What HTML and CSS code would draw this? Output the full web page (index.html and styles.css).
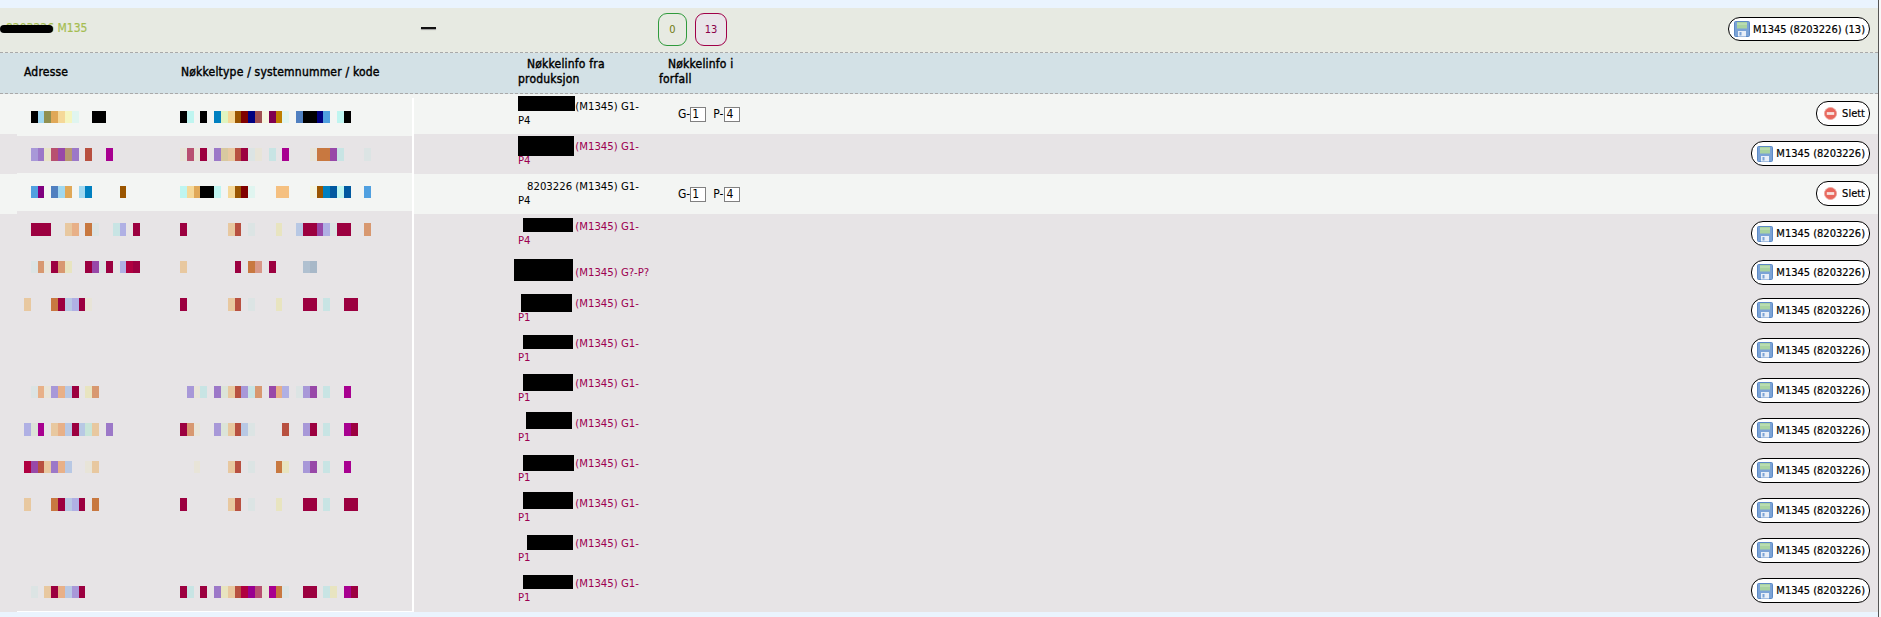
FILE: index.html
```html
<!DOCTYPE html>
<html lang="no">
<head>
<meta charset="utf-8">
<title>M1345</title>
<link rel="stylesheet" href="styles.css">
</head>
<body>
<svg class="defs" width="0" height="0" aria-hidden="true">
  <symbol id="save" viewBox="0 0 16 16">
    <rect x="0.5" y="0.5" width="15" height="15" rx="1" fill="#7ba3d6" stroke="#5d8ac6"/>
    <rect x="3" y="1" width="10" height="6.5" fill="#a9d3a0"/>
    <rect x="3" y="2.5" width="10" height="1" fill="#c9e6c2"/>
    <rect x="4" y="10" width="8" height="5.5" fill="#e9eff8"/>
    <rect x="5.5" y="11" width="2" height="3.5" fill="#7ba3d6"/>
  </symbol>
  <symbol id="del" viewBox="0 0 14 14">
    <circle cx="7" cy="7" r="6.5" fill="#e8675c" stroke="#eca8a0"/>
    <rect x="3" y="5.5" width="8" height="3" fill="#f8e4e0"/>
  </symbol>
</svg>
<main class="page">
  <section class="group">
    <div class="group-name">8203226 M135<span class="scribble"></span></div>
    <div class="group-dash"><span class="dash"></span></div>
    <div class="badges"><span class="badge badge-ok">0</span><span class="badge badge-due">13</span></div>
    <button class="btn btn-head" type="button"><svg class="ico"><use href="#save"/></svg>M1345 (8203226) (13)</button>
  </section>
  <header class="columns">
    <div>Adresse</div>
    <div>Nøkkeltype / systemnummer / kode</div>
    <div class="col-wrap">Nøkkelinfo fra produksjon</div>
    <div class="col-wrap col-due">Nøkkelinfo i forfall</div>
  </header>
  <div class="rows">
    <div class="row light">
      <div></div>
      <div class="info"><p>8203226 (M1345) G1-P4</p><span class="redact r1"></span></div>
      <div class="due">G-<input class="gp" value="1" readonly> <span class="p">P-</span><input class="gp" value="4" readonly></div>
      <button class="btn btn-del" type="button"><svg class="ico-del"><use href="#del"/></svg>Slett</button>
    </div>
    <div class="row dark">
      <div></div>
      <div class="info"><p>8203226 (M1345) G1-P4</p><span class="redact r2"></span></div>
      <div class="due"></div>
      <button class="btn" type="button"><svg class="ico"><use href="#save"/></svg>M1345 (8203226)</button>
    </div>
    <div class="row light">
      <div></div>
      <div class="info"><p>8203226 (M1345) G1-P4</p></div>
      <div class="due">G-<input class="gp" value="1" readonly> <span class="p">P-</span><input class="gp" value="4" readonly></div>
      <button class="btn btn-del" type="button"><svg class="ico-del"><use href="#del"/></svg>Slett</button>
    </div>
    <div class="row dark">
      <div></div>
      <div class="info"><p>8203226 (M1345) G1-P4</p><span class="redact r4"></span></div>
      <div class="due"></div>
      <button class="btn" type="button"><svg class="ico"><use href="#save"/></svg>M1345 (8203226)</button>
    </div>
    <div class="row dark short">
      <div></div>
      <div class="info"><p class="one">8203226 (M1345) G?-P?</p><span class="redact r5"></span></div>
      <div class="due"></div>
      <button class="btn" type="button"><svg class="ico"><use href="#save"/></svg>M1345 (8203226)</button>
    </div>
    <div class="row dark mid">
      <div></div>
      <div class="info"><p>8203226 (M1345) G1-P1</p><span class="redact r6"></span></div>
      <div class="due"></div>
      <button class="btn" type="button"><svg class="ico"><use href="#save"/></svg>M1345 (8203226)</button>
    </div>
    <div class="row dark">
      <div></div>
      <div class="info"><p>8203226 (M1345) G1-P1</p><span class="redact r7"></span></div>
      <div class="due"></div>
      <button class="btn" type="button"><svg class="ico"><use href="#save"/></svg>M1345 (8203226)</button>
    </div>
    <div class="row dark">
      <div></div>
      <div class="info"><p>8203226 (M1345) G1-P1</p><span class="redact r8"></span></div>
      <div class="due"></div>
      <button class="btn" type="button"><svg class="ico"><use href="#save"/></svg>M1345 (8203226)</button>
    </div>
    <div class="row dark">
      <div></div>
      <div class="info"><p>8203226 (M1345) G1-P1</p><span class="redact r9"></span></div>
      <div class="due"></div>
      <button class="btn" type="button"><svg class="ico"><use href="#save"/></svg>M1345 (8203226)</button>
    </div>
    <div class="row dark">
      <div></div>
      <div class="info"><p>8203226 (M1345) G1-P1</p><span class="redact r10"></span></div>
      <div class="due"></div>
      <button class="btn" type="button"><svg class="ico"><use href="#save"/></svg>M1345 (8203226)</button>
    </div>
    <div class="row dark">
      <div></div>
      <div class="info"><p>8203226 (M1345) G1-P1</p><span class="redact r11"></span></div>
      <div class="due"></div>
      <button class="btn" type="button"><svg class="ico"><use href="#save"/></svg>M1345 (8203226)</button>
    </div>
    <div class="row dark">
      <div></div>
      <div class="info"><p>8203226 (M1345) G1-P1</p><span class="redact r12"></span></div>
      <div class="due"></div>
      <button class="btn" type="button"><svg class="ico"><use href="#save"/></svg>M1345 (8203226)</button>
    </div>
    <div class="row dark tall">
      <div></div>
      <div class="info"><p>8203226 (M1345) G1-P1</p><span class="redact r13"></span></div>
      <div class="due"></div>
      <button class="btn" type="button"><svg class="ico"><use href="#save"/></svg>M1345 (8203226)</button>
    </div>

    <div class="mosaic">
      <div class="mrow lite">
        <div class="m"><i></i><i class="k"></i><i class="lb"></i><i class="ol"></i><i class="or"></i><i class="pe"></i><i class="ye"></i><i class="pc"></i><i></i><i></i><i class="k"></i><i class="k"></i></div>
        <div class="m"><i class="k"></i><i class="cy"></i><i></i><i class="k"></i><i></i><i class="bl"></i><i class="lg"></i><i class="pe"></i><i class="br"></i><i class="dr"></i><i class="nv"></i><i class="ro"></i><i class="cr"></i><i class="pl"></i><i class="go"></i><i class="pc"></i><i></i><i class="mb"></i><i class="k"></i><i class="k"></i><i class="nv"></i><i class="sb"></i><i></i><i class="cy"></i><i class="k"></i></div>
      </div>
      <div class="mrow">
        <div class="m"><i></i><i class="la"></i><i class="li"></i><i class="sa"></i><i class="rs"></i><i class="pu"></i><i class="ta"></i><i class="li"></i><i></i><i class="bk"></i><i></i><i></i><i class="mg"></i></div>
        <div class="m"><i class="sd"></i><i class="rs"></i><i class="sd"></i><i class="cm"></i><i></i><i class="li"></i><i class="ca"></i><i class="be"></i><i class="bk"></i><i class="cm"></i><i class="gc"></i><i class="sd"></i><i></i><i class="tc"></i><i></i><i class="mg"></i><i></i><i></i><i></i><i class="sd"></i><i class="oc"></i><i class="oc"></i><i class="pu"></i><i class="tc"></i><i></i><i></i><i></i><i class="gc"></i></div>
      </div>
      <div class="mrow lite">
        <div class="m"><i></i><i class="sb"></i><i class="vi"></i><i></i><i class="mb"></i><i class="lb"></i><i class="or"></i><i></i><i class="lb"></i><i class="bl"></i><i></i><i></i><i></i><i></i><i class="br"></i></div>
        <div class="m"><i class="cy"></i><i class="pe"></i><i class="or"></i><i class="k"></i><i class="k"></i><i class="cy"></i><i></i><i class="pe"></i><i class="br"></i><i class="dr"></i><i class="pc"></i><i></i><i></i><i></i><i class="ap"></i><i class="ap"></i><i></i><i></i><i></i><i class="cr"></i><i class="br"></i><i class="bl"></i><i class="db"></i><i class="cy"></i><i class="db"></i><i></i><i></i><i class="sb"></i></div>
      </div>
      <div class="mrow">
        <div class="m"><i></i><i class="cm"></i><i class="cm"></i><i class="cm"></i><i></i><i></i><i class="be"></i><i class="pp"></i><i></i><i class="oc"></i><i class="gc"></i><i></i><i></i><i class="tc"></i><i class="pb"></i><i></i><i class="cm"></i></div>
        <div class="m"><i class="cm"></i><i></i><i></i><i></i><i></i><i></i><i></i><i class="be"></i><i class="bk"></i><i></i><i class="gc"></i><i></i><i></i><i></i><i class="yl"></i><i></i><i></i><i class="sl"></i><i class="cm"></i><i class="cm"></i><i class="pu"></i><i class="pb"></i><i class="gc"></i><i class="cm"></i><i class="cm"></i><i></i><i></i><i class="sn"></i></div>
      </div>
      <div class="mrow">
        <div class="m"><i></i><i class="gc"></i><i class="sn"></i><i class="sd"></i><i class="cm"></i><i class="sn"></i><i class="yl"></i><i></i><i></i><i class="cm"></i><i class="pu"></i><i class="gc"></i><i class="cm"></i><i></i><i class="pb"></i><i class="ho"></i><i class="cm"></i></div>
        <div class="m"><i class="be"></i><i></i><i></i><i></i><i></i><i></i><i></i><i></i><i class="cm"></i><i></i><i class="oc"></i><i class="rb"></i><i></i><i class="cm"></i><i></i><i></i><i></i><i></i><i class="s1"></i><i class="s2"></i></div>
      </div>
      <div class="mrow">
        <div class="m"><i class="be"></i><i></i><i></i><i></i><i class="oc"></i><i class="cm"></i><i class="sl"></i><i class="pb"></i><i class="cm"></i><i class="sd"></i></div>
        <div class="m"><i class="cm"></i><i></i><i></i><i></i><i></i><i></i><i></i><i class="be"></i><i class="bk"></i><i></i><i class="gc"></i><i></i><i></i><i></i><i class="yl"></i><i></i><i></i><i></i><i class="cm"></i><i class="cm"></i><i></i><i class="tc"></i><i></i><i></i><i class="cm"></i><i class="cm"></i></div>
      </div>
      <div class="mrow gap"></div>
      <div class="mrow">
        <div class="m"><i></i><i class="gc"></i><i class="pp"></i><i class="sd"></i><i class="la"></i><i class="pp"></i><i class="sl"></i><i class="cm"></i><i></i><i class="yl"></i><i class="sn"></i></div>
        <div class="m"><i></i><i class="la"></i><i class="sd"></i><i class="tc"></i><i></i><i class="li"></i><i class="gy"></i><i class="be"></i><i class="bk"></i><i class="la"></i><i class="tc"></i><i class="sn"></i><i></i><i class="pu"></i><i class="pp"></i><i class="pb"></i><i></i><i class="gc"></i><i class="la"></i><i class="pu"></i><i></i><i class="tc"></i><i></i><i></i><i class="mg"></i></div>
      </div>
      <div class="mrow">
        <div class="m"><i class="pb"></i><i class="gy"></i><i class="mg"></i><i></i><i class="be"></i><i class="pp"></i><i class="sl"></i><i class="cm"></i><i class="sl"></i><i class="mt"></i><i class="be"></i><i></i><i class="li"></i></div>
        <div class="m"><i class="cm"></i><i class="sn"></i><i class="sd"></i><i></i><i></i><i class="la"></i><i class="gy"></i><i class="be"></i><i class="bk"></i><i class="sl"></i><i class="gc"></i><i></i><i></i><i></i><i></i><i class="bk"></i><i></i><i></i><i class="la"></i><i class="cm"></i><i></i><i class="tc"></i><i></i><i></i><i class="mg"></i><i class="cm"></i></div>
      </div>
      <div class="mrow">
        <div class="m"><i class="ho"></i><i class="pu"></i><i class="bk"></i><i class="be"></i><i class="li"></i><i class="pp"></i><i class="sl"></i><i></i><i></i><i class="sd"></i><i class="be"></i></div>
        <div class="m"><i></i><i></i><i class="sd"></i><i></i><i></i><i></i><i></i><i class="be"></i><i class="bk"></i><i></i><i class="gc"></i><i></i><i></i><i></i><i class="oc"></i><i class="yl"></i><i></i><i></i><i class="la"></i><i class="pu"></i><i></i><i class="tc"></i><i></i><i></i><i class="mg"></i></div>
      </div>
      <div class="mrow">
        <div class="m"><i class="be"></i><i></i><i></i><i></i><i class="oc"></i><i class="cm"></i><i class="sl"></i><i class="pb"></i><i class="cm"></i><i></i><i class="oc"></i></div>
        <div class="m"><i class="cm"></i><i></i><i></i><i></i><i></i><i></i><i></i><i class="be"></i><i class="bk"></i><i></i><i class="gc"></i><i></i><i></i><i></i><i class="yl"></i><i></i><i></i><i></i><i class="cm"></i><i class="cm"></i><i></i><i class="tc"></i><i></i><i></i><i class="cm"></i><i class="cm"></i></div>
      </div>
      <div class="mrow gap"></div>
      <div class="mrow">
        <div class="m"><i></i><i class="gc"></i><i></i><i class="be"></i><i class="cm"></i><i class="pp"></i><i class="sl"></i><i class="la"></i><i class="cm"></i></div>
        <div class="m"><i class="cm"></i><i class="tc"></i><i></i><i class="cm"></i><i></i><i class="li"></i><i class="yl"></i><i class="be"></i><i class="bk"></i><i class="ho"></i><i class="vm"></i><i class="rs"></i><i class="sd"></i><i class="mg"></i><i class="oc"></i><i class="gc"></i><i></i><i></i><i class="cm"></i><i class="cm"></i><i></i><i class="tc"></i><i class="yl"></i><i></i><i class="mg"></i><i class="cm"></i></div>
      </div>
    </div>
  </div>
</main>
</body>
</html>
```
FILE: styles.css
```css
html, body {
  margin: 0;
  padding: 0;
  background: #f8f8f8;
}
body {
  font-family: "DejaVu Sans Condensed", "DejaVu Sans", sans-serif;
  font-stretch: condensed;
  font-size: 11px;
  color: #000;
  overflow: hidden;
}
.defs { position: absolute; }
.page {
  width: 1879px;
  height: 617px;
  padding-top: 8px;
  box-sizing: border-box;
  background: #eaf4fe;
  border-right: 1px solid #555;
}

/* group bar */
.group {
  height: 45px;
  box-sizing: border-box;
  background: #e7eae2;
  border-bottom: 1px dashed #a9a9a9;
  display: grid;
  grid-template-columns: 421px 237px auto 1fr auto;
  align-items: center;
  padding-right: 8px;
}
.group-name {
  position: relative;
  color: #a5bd50;
  -webkit-text-stroke: 0.2px #a5bd50;
  font-size: 12px;
  padding-left: 6px;
  top: -2px;
}
.scribble {
  position: absolute;
  left: 0;
  top: 4px;
  width: 53px;
  height: 8px;
  background: #000;
  border-radius: 4px;
}
.group-dash { display: flex; align-items: center; position: relative; top: -2px; }
.dash {
  width: 15px;
  height: 2px;
  background: #111;
  box-shadow: 0 1px 1px #999;
}
.badges { display: flex; gap: 8px; position: relative; top: -0.5px; }
.badge {
  box-sizing: border-box;
  height: 33px;
  border-radius: 9px;
  display: flex;
  align-items: center;
  justify-content: center;
}
.badge-ok { width: 29px; border: 1px solid #2f9a3c; color: #6f7a10; }
.badge-due { width: 32px; border: 1px solid #a00048; background: #e9e5e9; color: #8a0048; }

.btn {
  grid-column: -2;
  justify-self: end;
  box-sizing: border-box;
  height: 25px;
  margin-bottom: 1px;
  padding: 0 4px 0 5px;
  display: flex;
  align-items: center;
  gap: 3px;
  font: inherit;
  font-stretch: condensed;
  -webkit-text-stroke: 0.2px #000;
  color: #000;
  background: #fff;
  border: 1px solid #000;
  border-radius: 12px;
}
.btn-head { height: 24px; margin-bottom: 0; position: relative; top: -1px; }
.btn-del { padding: 0 4px 0 7px; gap: 5px; }
.ico { width: 16px; height: 16px; flex: none; }
.ico-del { width: 13px; height: 13px; flex: none; }

/* column heads */
.columns {
  height: 41px;
  box-sizing: border-box;
  background: #d3e1e6;
  border-bottom: 1px dashed #a9a9a9;
  padding: 0 0 2px 24px;
  display: grid;
  grid-template-columns: 157px 337px 141px 100px;
  align-items: center;
  font-size: 12px;
  letter-spacing: 0.2px;
  -webkit-text-stroke: 0.4px #000;
  line-height: 15px;
}
.col-wrap { text-indent: 9px; width: 105px; }
.col-due { width: 82px; }

/* rows */
.rows { position: relative; }
.row {
  height: 40px;
  display: grid;
  grid-template-columns: 518px 141px 1fr auto;
  align-items: center;
  padding-right: 8px;
}
.row.short { height: 37px; }
.row.mid { height: 39.5px; }
.row.tall { height: 41px; }
.light { background: #f3f5f3; }
.dark { background: #e7e4e6; color: #9c0050; }
.info {
  position: relative;
  align-self: stretch;
  display: flex;
  align-items: center;
  font-size: 11.25px;
}
.info p {
  margin: 0;
  width: 130px;
  text-indent: 9px;
  line-height: 14px;
}
.info .one { white-space: nowrap; }
.redact { position: absolute; background: #000; }
.r1 { left: 0; top: 2px; width: 57px; height: 15px; }
.r2 { left: 0; top: 2px; width: 56px; height: 20px; }
.r4 { left: 5px; top: 4px; width: 50px; height: 14px; }
.r5 { left: -4px; top: 5px; width: 59px; height: 22px; }
.r6 { left: 3px; top: 3px; width: 51px; height: 18px; }
.r7 { left: 5px; top: 4.5px; width: 50px; height: 14px; }
.r8 { left: 5px; top: 3.5px; width: 50px; height: 17px; }
.r9 { left: 8px; top: 1px; width: 46px; height: 17px; }
.r10 { left: 5px; top: 4px; width: 51px; height: 16px; }
.r11 { left: 5px; top: 1px; width: 50px; height: 17px; }
.r12 { left: 9px; top: 4px; width: 46px; height: 15px; }
.r13 { left: 5px; top: 4px; width: 50px; height: 14px; }
.due { padding-left: 19px; display: flex; align-items: center; font-size: 12px; }
.p { margin-left: 7px; margin-right: 1px; }
.gp {
  box-sizing: border-box;
  width: 16px;
  height: 15px;
  margin: 0;
  padding: 0 0 0 1px;
  border: 1px solid #808080;
  border-radius: 0;
  background: #fff;
  font: inherit;
  font-stretch: condensed;
  color: #000;
  outline: none;
}

/* pasted blur panel */
.mosaic {
  position: absolute;
  left: 17px;
  top: 4px;
  width: 395px;
  background: #e7e4e6;
  border-right: 2px solid #fff;
  border-bottom: 1px solid #fff;
}
.mrow {
  height: 37.5px;
  box-sizing: border-box;
  padding-left: 7px;
  display: grid;
  grid-template-columns: 156px 1fr;
  align-items: center;
}
.mrow.gap { height: 50px; }
.lite { background: #f3f5f3; }
.m { display: flex; height: 12.5px; }
.m i { display: block; width: 6.83px; height: 12.5px; flex: none; }
.k { background: #000; }
.lb { background: #a0d8f0; }
.ol { background: #909050; }
.or { background: #e0a858; }
.pe { background: #f5d898; }
.ye { background: #f5f5c0; }
.pc { background: #e0f5f0; }
.cy { background: #bff5f0; }
.bl { background: #0080c0; }
.lg { background: #e0f5c0; }
.br { background: #9a5500; }
.dr { background: #800000; }
.nv { background: #000080; }
.ro { background: #a05050; }
.cr { background: #f5f5e0; }
.pl { background: #800050; }
.go { background: #c08000; }
.mb { background: #5080c0; }
.sb { background: #50a0e0; }
.db { background: #0058a0; }
.vi { background: #800080; }
.ap { background: #f5c080; }
.la { background: #a898d8; }
.li { background: #9c78c8; }
.sa { background: #e8e4c8; }
.rs { background: #b85070; }
.pu { background: #9848a8; }
.ta { background: #b89870; }
.bk { background: #b85040; }
.mg { background: #a80090; }
.sd { background: #e8e4d8; }
.cm { background: #9c0040; }
.ca { background: #d8c8a0; }
.be { background: #e8c8a0; }
.gc { background: #dce4e4; }
.tc { background: #c8e4e4; }
.oc { background: #c87840; }
.pp { background: #e8b088; }
.pb { background: #b0b0e4; }
.sl { background: #b8c8e4; }
.sn { background: #d89870; }
.ho { background: #b00040; }
.rb { background: #d89888; }
.s1 { background: #b0c0d0; }
.s2 { background: #a8b8c8; }
.gy { background: #dce4d8; }
.yl { background: #e8e4c0; }
.mt { background: #c8e4d8; }
.vm { background: #980090; }
```
